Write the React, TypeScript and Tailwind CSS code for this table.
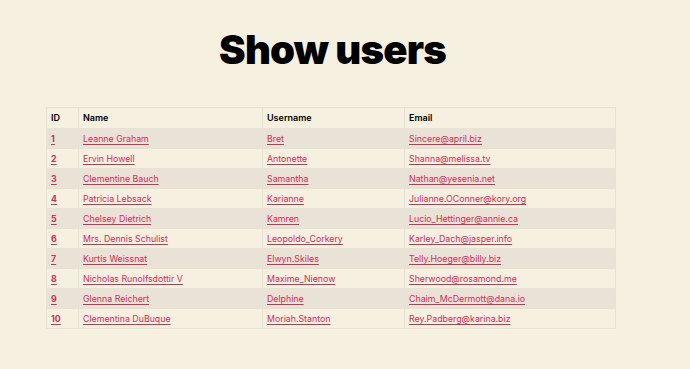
const users = [
  { id: 1, name: 'Leanne Graham', username: 'Bret', email: 'Sincere@april.biz' },
  { id: 2, name: 'Ervin Howell', username: 'Antonette', email: 'Shanna@melissa.tv' },
  { id: 3, name: 'Clementine Bauch', username: 'Samantha', email: 'Nathan@yesenia.net' },
  { id: 4, name: 'Patricia Lebsack', username: 'Karianne', email: 'Julianne.OConner@kory.org' },
  { id: 5, name: 'Chelsey Dietrich', username: 'Kamren', email: 'Lucio_Hettinger@annie.ca' },
  { id: 6, name: 'Mrs. Dennis Schulist', username: 'Leopoldo_Corkery', email: 'Karley_Dach@jasper.info' },
  { id: 7, name: 'Kurtis Weissnat', username: 'Elwyn.Skiles', email: 'Telly.Hoeger@billy.biz' },
  { id: 8, name: 'Nicholas Runolfsdottir V', username: 'Maxime_Nienow', email: 'Sherwood@rosamond.me' },
  { id: 9, name: 'Glenna Reichert', username: 'Delphine', email: 'Chaim_McDermott@dana.io' },
  { id: 10, name: 'Clementina DuBuque', username: 'Moriah.Stanton', email: 'Rey.Padberg@karina.biz' },
];

const link = 'text-[#cc2f58] underline underline-offset-[1.5px]';
const cell = 'border border-[#e8e2d3] px-[4px]';

export default function App() {
  return (
    <div className="min-h-screen bg-[#f6f0e1] font-['Inter',sans-serif] text-black">
      <h1 className="mr-[25px] pt-[26px] text-center text-[40px] font-black leading-[48px] tracking-[-0.02em]">
        Show users
      </h1>
      <div className="mt-[33px] flex justify-center pr-[28px]">
        <table className="w-[570px] border-collapse border border-[#e8e2d3] text-[8.8px]">
          <thead>
            <tr className="h-[21px] text-[9px]">
              <th className={`w-[32px] ${cell} text-left font-semibold`}>ID</th>
              <th className={`w-[184px] ${cell} text-left font-semibold`}>Name</th>
              <th className={`w-[142px] ${cell} text-left font-semibold`}>Username</th>
              <th className={`${cell} text-left font-semibold`}>Email</th>
            </tr>
          </thead>
          <tbody>
            {users.map((u, i) => (
              <tr key={u.id} className={`h-[20px] ${i % 2 === 0 ? 'bg-[#e8e3d6]' : ''}`}>
                <td className={cell}>
                  <a href="#" className={`${link} font-bold`}>{u.id}</a>
                </td>
                <td className={cell}>
                  <a href="#" className={link}>{u.name}</a>
                </td>
                <td className={cell}>
                  <a href="#" className={link}>{u.username}</a>
                </td>
                <td className={cell}>
                  <a href="#" className={link}>{u.email}</a>
                </td>
              </tr>
            ))}
          </tbody>
        </table>
      </div>
    </div>
  );
}
